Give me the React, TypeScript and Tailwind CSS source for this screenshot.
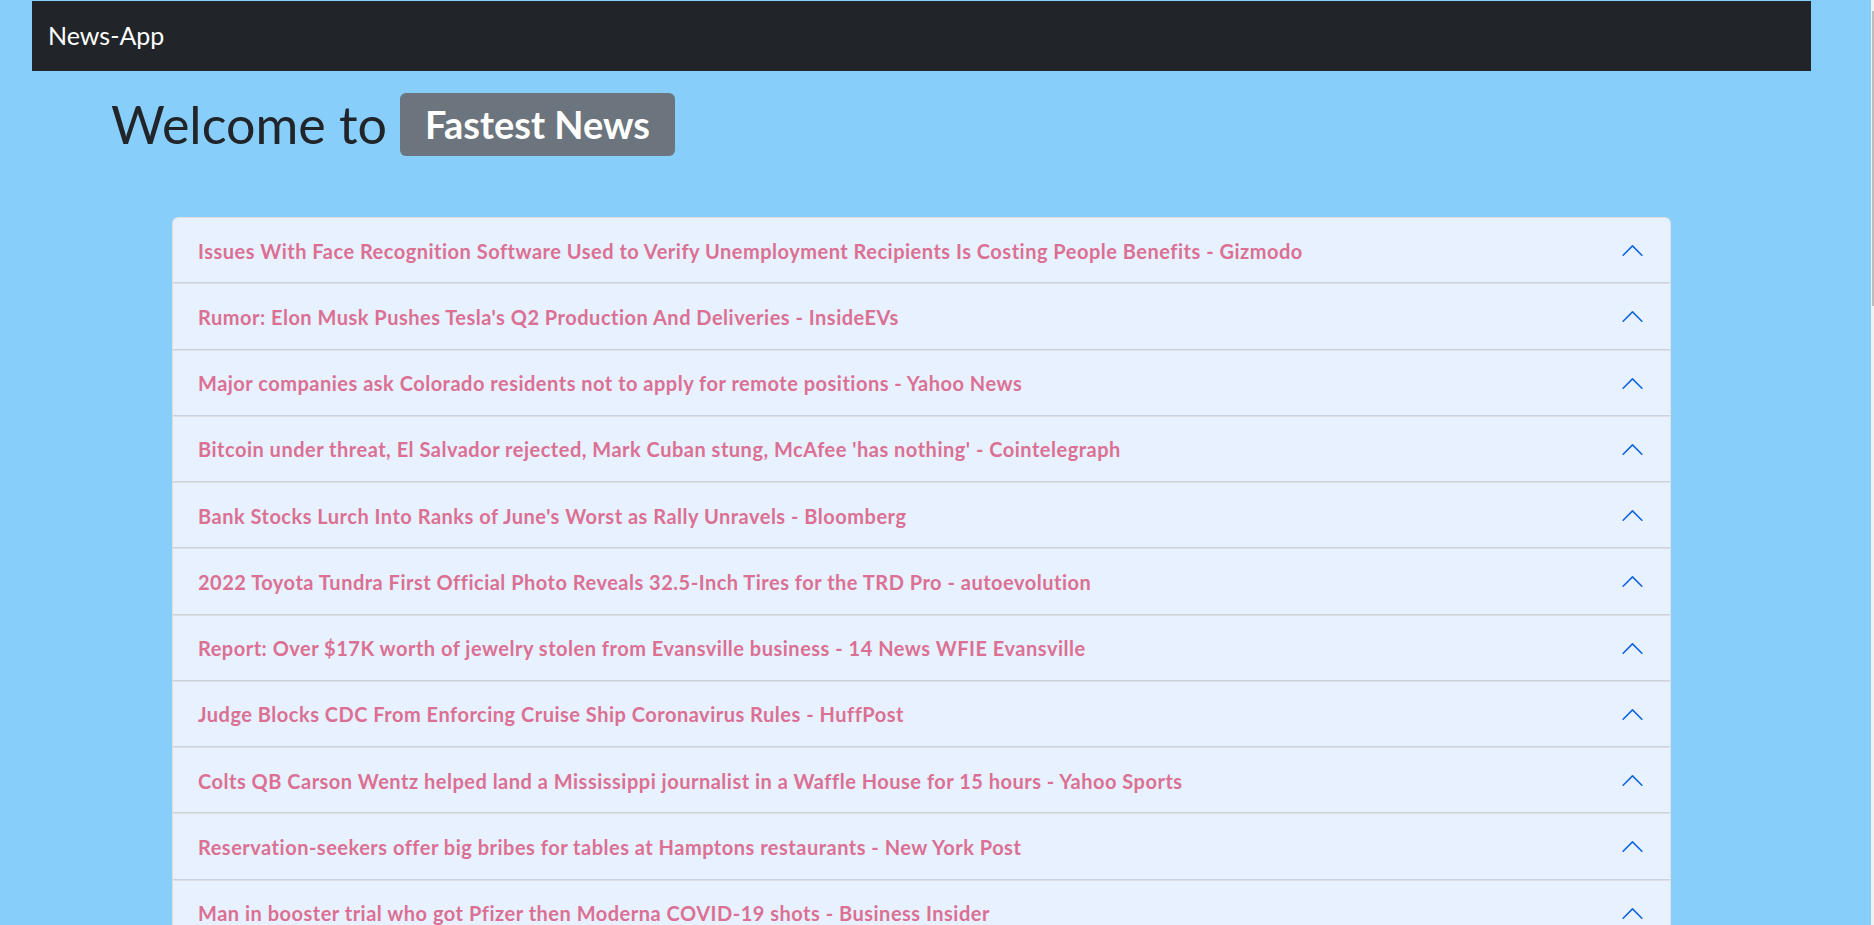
import React from 'react';

const headlines = [
  'Issues With Face Recognition Software Used to Verify Unemployment Recipients Is Costing People Benefits - Gizmodo',
  "Rumor: Elon Musk Pushes Tesla's Q2 Production And Deliveries - InsideEVs",
  'Major companies ask Colorado residents not to apply for remote positions - Yahoo News',
  "Bitcoin under threat, El Salvador rejected, Mark Cuban stung, McAfee 'has nothing' - Cointelegraph",
  "Bank Stocks Lurch Into Ranks of June's Worst as Rally Unravels - Bloomberg",
  '2022 Toyota Tundra First Official Photo Reveals 32.5-Inch Tires for the TRD Pro - autoevolution',
  'Report: Over $17K worth of jewelry stolen from Evansville business - 14 News WFIE Evansville',
  'Judge Blocks CDC From Enforcing Cruise Ship Coronavirus Rules - HuffPost',
  'Colts QB Carson Wentz helped land a Mississippi journalist in a Waffle House for 15 hours - Yahoo Sports',
  'Reservation-seekers offer big bribes for tables at Hamptons restaurants - New York Post',
  'Man in booster trial who got Pfizer then Moderna COVID-19 shots - Business Insider',
  'Stocks making the biggest moves midday - CNBC',
];

const ChevronUp = () => (
  <svg width="25" height="25" viewBox="0 0 16 16" className="rotate-180 shrink-0" fill="#0c63e4">
    <path
      fillRule="evenodd"
      d="M1.646 4.646a.5.5 0 0 1 .708 0L8 10.293l5.646-5.647a.5.5 0 0 1 .708.708l-6 6a.5.5 0 0 1-.708 0l-6-6a.5.5 0 0 1 0-.708z"
    />
  </svg>
);

export default function App() {
  return (
    <div className="flex h-[925px] w-full overflow-hidden bg-[#87cefa] font-['Lato','Liberation_Sans',sans-serif]">
      <div className="flex-1 overflow-hidden">
        {/* Navbar */}
        <nav className="ml-[32px] mt-[1px] flex h-[70px] w-[1779px] items-center bg-[#212529] pl-[16px]">
          <span className="text-[25px] text-white">News-App</span>
        </nav>

        {/* Heading */}
        <div className="ml-[111px] mt-[22px] flex h-[62px] items-center text-[52px] text-[#212529]">
          <span>Welcome to</span>
          <span className="ml-[13px] flex h-[63px] items-center rounded-[6px] bg-[#6c757d] px-[25px] text-[38px] font-bold text-white">
            Fastest News
          </span>
        </div>

        {/* Accordion */}
        <div className="ml-[172px] mt-[62px] w-[1499px] overflow-hidden rounded-t-[6px] border border-b-0 border-[#dfdfdf]">
          {headlines.map((h, i) => (
            <div key={i} className="border-b border-[#dfdfdf] bg-white">
              <div className="flex h-[65.25px] items-center justify-between bg-[#e7f1ff] px-[25px] shadow-[inset_0_-1px_0_rgba(0,0,0,0.125)]">
                <span className="text-[20px] font-bold tracking-[0.5px] text-[#db7093]">{h}</span>
                <ChevronUp />
              </div>
            </div>
          ))}
        </div>
      </div>

      {/* Scrollbar strip */}
      <div className="relative w-[3px] bg-[#f1f1f1]">
        <div className="absolute right-0 top-[11px] h-[295px] w-[2px] bg-[#bdbdbd]" />
      </div>
    </div>
  );
}
